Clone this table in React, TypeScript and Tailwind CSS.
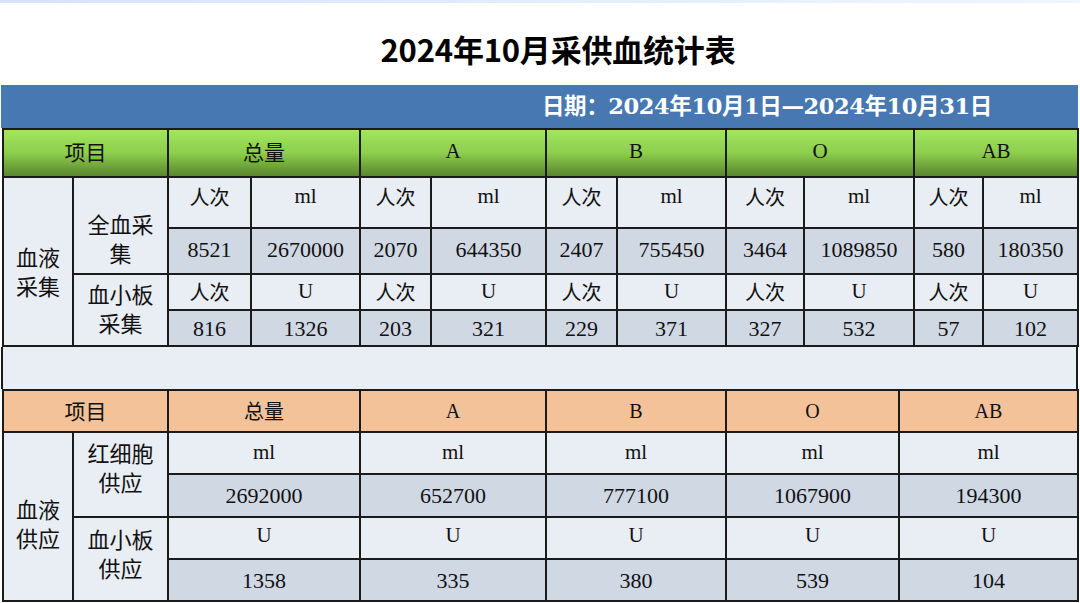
const collect = [
  { name: 'A', n1: '2070', v1: '644350', n2: '203', v2: '321' },
  { name: 'B', n1: '2407', v1: '755450', n2: '229', v2: '371' },
  { name: 'O', n1: '3464', v1: '1089850', n2: '327', v2: '532' },
  { name: 'AB', n1: '580', v1: '180350', n2: '57', v2: '102' },
]

const supply = [
  { name: '总量', rbc: '2692000', plt: '1358' },
  { name: 'A', rbc: '652700', plt: '335' },
  { name: 'B', rbc: '777100', plt: '380' },
  { name: 'O', rbc: '1067900', plt: '539' },
  { name: 'AB', rbc: '194300', plt: '104' },
]

const serif = "font-['Liberation_Serif','Noto_Sans_CJK_SC',serif]"
const cjk = "font-['Noto_Sans_CJK_SC',sans-serif]"

const App = () => {
  const cell = 'border-2 border-[#1b1b1b] text-center align-middle p-0'
  const light = 'bg-[#e9edf4]'
  const dark = 'bg-[#d0d8e4]'
  const green = 'bg-linear-to-b from-[#a2e65e] via-[#8dce4d] to-[#5a872f] font-normal text-[#111]'
  const orange = 'bg-[#f3c299] font-normal text-[#111]'
  const unit = `${cjk} text-[20px]`
  const label = `${cjk} text-[22px] leading-[29px]`

  return (
    <div className="w-[1080px] h-[603px] bg-white overflow-hidden text-[#111]">
      <div className="h-[3px] bg-linear-to-r from-[#d4e4fa] to-[#eef5fe]" />
      {/* title */}
      <div className="h-[82px] flex items-center justify-center pl-[36px]">
        <h1 className={`${cjk} font-bold text-[31px] tracking-[-0.2px] text-black pt-[10px]`}>2024年10月采供血统计表</h1>
      </div>
      <div className="ml-[1px] w-[1077px]">
        <div className="h-[43px] bg-[#4778b1] flex items-center pl-[541px] pt-[1px]">
          <span className="font-['DejaVu_Serif','Noto_Sans_CJK_SC',serif] font-bold text-[22.5px] text-white tracking-[-0.4px]">
            日期：2024年10月1日—2024年10月31日
          </span>
        </div>

        {/* collection */}
        <table className={`w-[1075px] ml-[1px] table-fixed border-collapse ${serif} text-[22px]`}>
          <colgroup>
            {[70, 95, 83, 109, 71, 115, 71, 109, 78, 110, 69, 95].map((w, i) => (
              <col key={i} style={{ width: w }} />
            ))}
          </colgroup>
          <tbody>
            <tr className="h-[48px]">
              <th colSpan={2} className={`${cell} ${green} ${cjk} text-[21px] pb-[2px]`}>项目</th>
              <th colSpan={2} className={`${cell} ${green} ${cjk} text-[21px] pb-[2px]`}>总量</th>
              {collect.map(c => (
                <th key={c.name} colSpan={2} className={`${cell} ${green} text-[21px] pb-[2px]`}>{c.name}</th>
              ))}
            </tr>
            <tr className="h-[51px]">
              <td rowSpan={4} className={`${cell} ${light} ${label} pt-[18px]`}>血液<br />采集</td>
              <td rowSpan={2} className={`${cell} ${light} ${label} pt-[24px]`}>全血采<br />集</td>
              <td className={`${cell} ${light} ${unit} pb-[12px]`}>人次</td>
              <td className={`${cell} ${light} text-[21px] pb-[12px]`}>ml</td>
              {collect.map(c => (
                <>
                  <td key={c.name + 'a'} className={`${cell} ${light} ${unit} pb-[12px]`}>人次</td>
                  <td key={c.name + 'b'} className={`${cell} ${light} text-[21px] pb-[12px]`}>ml</td>
                </>
              ))}
            </tr>
            <tr className="h-[46px]">
              <td className={`${cell} ${dark} pb-[4px]`}>8521</td>
              <td className={`${cell} ${dark} pb-[4px]`}>2670000</td>
              {collect.map(c => (
                <>
                  <td key={c.name + 'c'} className={`${cell} ${dark} pb-[4px]`}>{c.n1}</td>
                  <td key={c.name + 'd'} className={`${cell} ${dark} pb-[4px]`}>{c.v1}</td>
                </>
              ))}
            </tr>
            <tr className="h-[36px]">
              <td rowSpan={2} className={`${cell} ${light} ${label} pb-[4px]`}>血小板<br />采集</td>
              <td className={`${cell} ${light} ${unit}`}>人次</td>
              <td className={`${cell} ${light} text-[21px]`}>U</td>
              {collect.map(c => (
                <>
                  <td key={c.name + 'e'} className={`${cell} ${light} ${unit}`}>人次</td>
                  <td key={c.name + 'f'} className={`${cell} ${light} text-[21px]`}>U</td>
                </>
              ))}
            </tr>
            <tr className="h-[36px]">
              <td className={`${cell} ${dark}`}>816</td>
              <td className={`${cell} ${dark}`}>1326</td>
              {collect.map(c => (
                <>
                  <td key={c.name + 'g'} className={`${cell} ${dark}`}>{c.n2}</td>
                  <td key={c.name + 'h'} className={`${cell} ${dark}`}>{c.v2}</td>
                </>
              ))}
            </tr>
          </tbody>
        </table>

        {/* gap row */}
        <div className="h-[42px] bg-[#e9edf4] border-x-2 border-[#1b1b1b]" />

        {/* supply */}
        <table className={`w-[1075px] ml-[1px] table-fixed border-collapse ${serif} text-[22px]`}>
          <colgroup>
            {[70, 95, 192, 186, 180, 173, 179].map((w, i) => (
              <col key={i} style={{ width: w }} />
            ))}
          </colgroup>
          <tbody>
            <tr className="h-[42px]">
              <th colSpan={2} className={`${cell} ${orange} ${cjk} text-[21px]`}>项目</th>
              {supply.map(s => (
                <th key={s.name} className={`${cell} ${orange} ${s.name === '总量' ? cjk : ''} text-[20px]`}>{s.name}</th>
              ))}
            </tr>
            <tr className="h-[42px]">
              <td rowSpan={4} className={`${cell} ${light} ${label} pt-[12px]`}>血液<br />供应</td>
              <td rowSpan={2} className={`${cell} ${light} ${label} pb-[16px]`}>红细胞<br />供应</td>
              {supply.map(s => (
                <td key={s.name} className={`${cell} ${light} text-[21px]`}>ml</td>
              ))}
            </tr>
            <tr className="h-[43px]">
              {supply.map(s => (
                <td key={s.name} className={`${cell} ${dark}`}>{s.rbc}</td>
              ))}
            </tr>
            <tr className="h-[42px]">
              <td rowSpan={2} className={`${cell} ${light} ${label} pb-[12px]`}>血小板<br />供应</td>
              {supply.map(s => (
                <td key={s.name} className={`${cell} ${light} text-[21px] pb-[4px]`}>U</td>
              ))}
            </tr>
            <tr className="h-[42px]">
              {supply.map(s => (
                <td key={s.name} className={`${cell} ${dark}`}>{s.plt}</td>
              ))}
            </tr>
          </tbody>
        </table>
      </div>
    </div>
  )
}

export default App
